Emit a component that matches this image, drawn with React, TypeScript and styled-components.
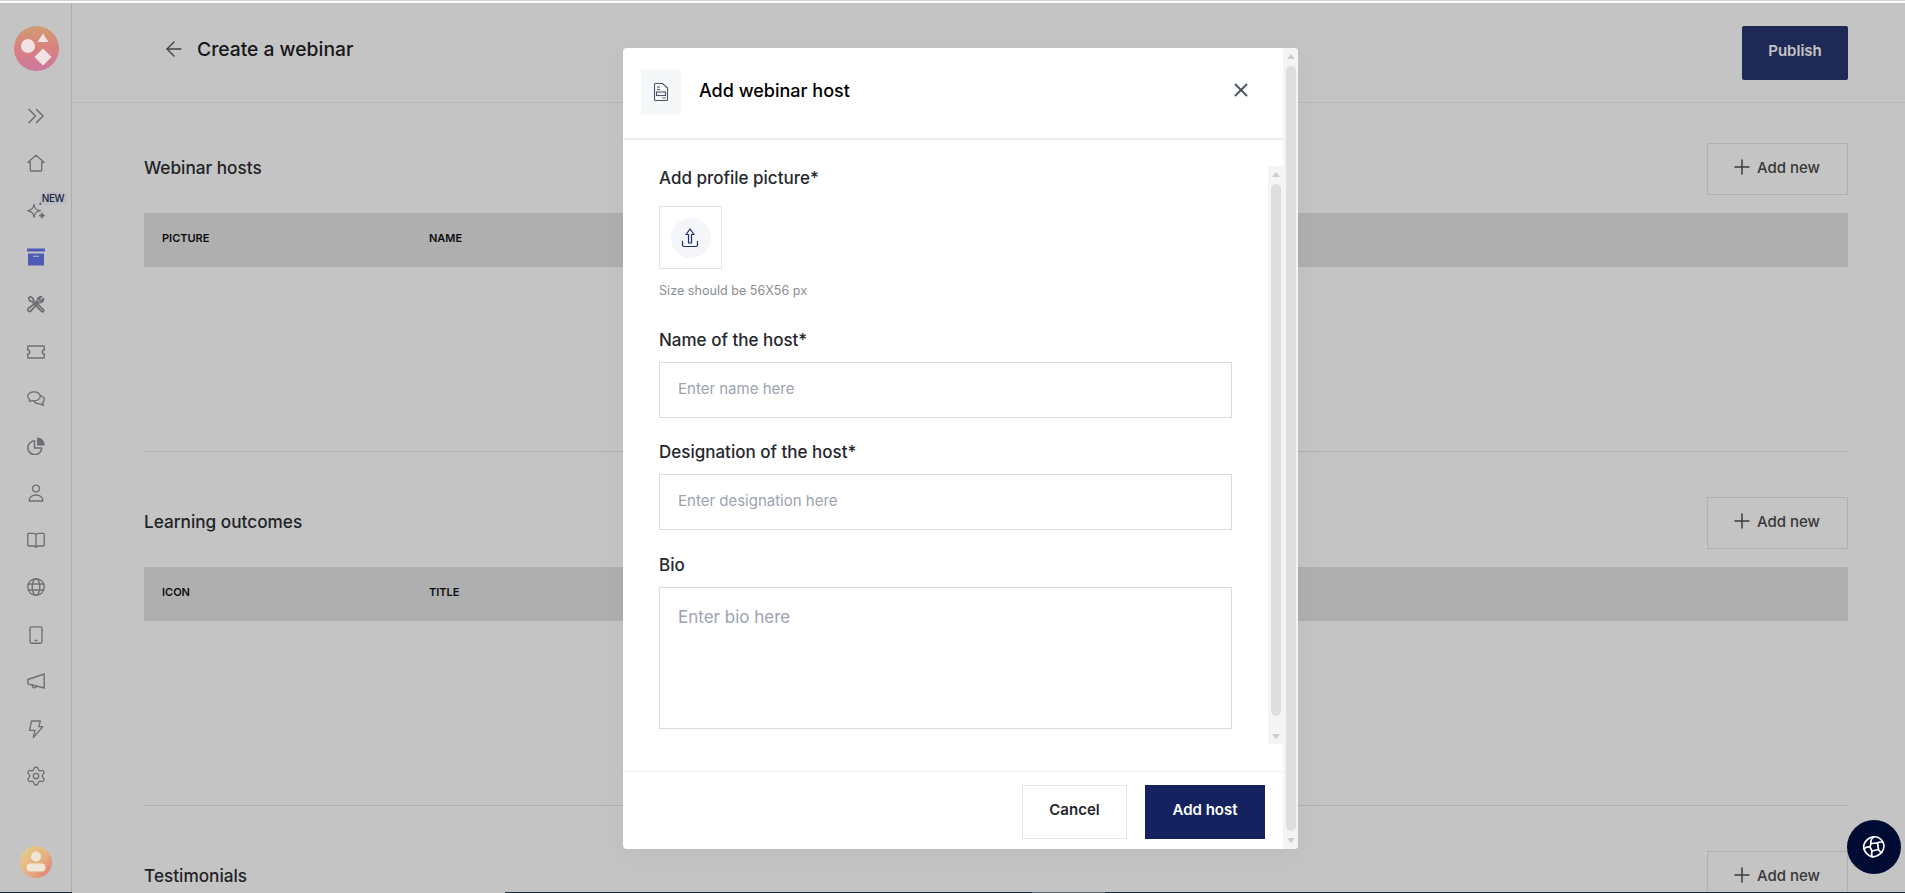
import React from 'react'
import styled, { createGlobalStyle } from 'styled-components'
import { ArrowLeft, Plus, Settings, X } from 'lucide-react'

const GlobalStyle = createGlobalStyle`
  * { box-sizing: border-box; }
  html, body { margin: 0; padding: 0; height: 100%; overflow: hidden; }
  body { font-family: Inter, "Liberation Sans", sans-serif; background: #fff; color: #1f2328; }
`

const Page = styled.div`
  position: relative;
  width: 1905px;
  height: 893px;
  display: flex;
  flex-direction: column;
  overflow: hidden;
`

const TopEdge = styled.div`
  height: 3px;
  flex: none;
  background: #fff;
  border-top: 1px solid #d4d4d4;
`

const Shell = styled.div`
  flex: 1;
  min-height: 0;
  display: flex;
`

const Sidebar = styled.aside`
  width: 72px;
  flex: none;
  display: flex;
  flex-direction: column;
  align-items: center;
  padding: 23px 0 14px;
  border-right: 1px solid #e0e0e0;
`

const Logo = styled.svg`
  position: relative;
  z-index: 11;
  width: 45px;
  height: 45px;
  margin-left: 1px;
  flex: none;
`

const Nav = styled.nav`
  margin-top: 21px;
  display: grid;
  grid-auto-rows: 47.2px;
  justify-items: center;
  align-items: center;
  width: 100%;
`

const NavItem = styled.div<{ $active?: boolean }>`
  position: relative;
  width: 18px;
  height: 18px;
  color: ${p => (p.$active ? '#6776ef' : '#8d9196')};
  svg { display: block; width: 18px; height: 18px; }
`

const GearIcon = styled(Settings)`
  transform: scale(1.2);
`

const NewBadge = styled.span`
  position: absolute;
  top: -9px;
  left: 13px;
  width: 27px;
  height: 13px;
  border-radius: 7px;
  background: #f4f4ff;
  color: #2a3150;
  font-size: 10px;
  font-weight: 500;
  letter-spacing: -0.3px;
  line-height: 13px;
  text-align: center;
`

const Avatar = styled.svg`
  position: relative;
  z-index: 11;
  margin-top: auto;
  width: 32px;
  height: 32px;
  flex: none;
`

const Main = styled.main`
  flex: 1;
  min-width: 0;
  overflow: hidden;
`

const TopBar = styled.header`
  height: 100px;
  display: flex;
  align-items: center;
  justify-content: space-between;
  padding: 0 57px 0 90px;
  border-bottom: 1px solid #ececec;
`

const BackTitle = styled.div`
  display: flex;
  align-items: center;
  gap: 11px;
  margin-bottom: 8px;
  font-size: 19.3px;
  font-weight: 500;
  color: #1d1d1f;
  svg { color: #555; }
`

const Publish = styled.button`
  width: 106px;
  height: 54px;
  border: 0;
  border-radius: 2px;
  background: #27376f;
  color: #fff;
  font: 600 15px Inter, "Liberation Sans", sans-serif;
  padding: 0 0 4px;
`

const Content = styled.div`
  padding: 0 57px 0 72px;
`

const Section = styled.section`
  padding-top: 40px;
  margin-bottom: 5px;
`

const SectionHead = styled.div`
  height: 52px;
  display: flex;
  align-items: center;
  justify-content: space-between;
  margin-bottom: 18px;
`

const SectionTitle = styled.h2`
  margin: 0 0 4px;
  font-size: 17.2px;
  font-weight: 500;
  color: #2c2e33;
`

const AddNew = styled.button`
  width: 141px;
  height: 52px;
  display: flex;
  align-items: center;
  justify-content: center;
  gap: 3px;
  padding: 0 5px 4px 0;
  border: 1px solid #e6e6e6;
  background: transparent;
  color: #4a4a4a;
  font: 500 15px Inter, "Liberation Sans", sans-serif;
`

const TableHead = styled.div`
  height: 54px;
  display: flex;
  align-items: center;
  padding: 0 18px 5px;
  background: #e4e4e4;
  font-size: 11px;
  font-weight: 600;
  color: #111;
`

const HeadCell = styled.span<{ $wide?: boolean }>`
  width: ${p => (p.$wide ? '267px' : 'auto')};
`

const TableBody = styled.div`
  height: 185px;
  border-bottom: 1px solid #e4e4e4;
`

const Overlay = styled.div`
  position: absolute;
  inset: 3px 0 0 0;
  z-index: 10;
  background: rgba(0, 0, 0, 0.23);
`

const Modal = styled.div`
  position: absolute;
  top: 45px;
  left: 623px;
  width: 675px;
  height: 801px;
  display: flex;
  background: #fff;
  border-radius: 4px;
  overflow: hidden;
  box-shadow: 0 6px 30px rgba(120, 70, 70, 0.05);
`

const ModalMain = styled.div`
  flex: 1;
  min-width: 0;
  display: flex;
  flex-direction: column;
`

const ModalHeader = styled.div`
  height: 90px;
  flex: none;
  display: flex;
  align-items: center;
  padding: 0 31px 6px 18px;
  box-shadow: 0 1px 3px rgba(0, 0, 0, 0.14);
`

const HeaderIcon = styled.div`
  width: 40px;
  height: 46px;
  margin-top: 3px;
  display: flex;
  align-items: center;
  justify-content: center;
  background: #f6f7f9;
  color: #4a5568;
`

const ModalTitle = styled.h3`
  flex: 1;
  margin: 0 0 0 18px;
  font-size: 18px;
  font-weight: 500;
  color: #000;
`

const CloseButton = styled.button`
  display: flex;
  padding: 0;
  border: 0;
  background: none;
  color: #4b5563;
`

const ModalBody = styled.div`
  flex: 1;
  min-height: 0;
  display: flex;
  padding: 28px 0 27px;
`

const Form = styled.form`
  flex: 1;
  min-width: 0;
  padding: 0 36px;
`

const Label = styled.label<{ $gap: number }>`
  display: block;
  margin-top: ${p => p.$gap}px;
  font-size: 17px;
  font-weight: 500;
  line-height: 24px;
  color: #24272c;
`

const UploadBox = styled.div`
  width: 63px;
  height: 63px;
  margin-top: 16px;
  display: flex;
  align-items: center;
  justify-content: center;
  border: 1px solid #e5e5e5;
`

const UploadCircle = styled.div`
  width: 40px;
  height: 40px;
  display: flex;
  align-items: center;
  justify-content: center;
  border-radius: 50%;
  background: #f5f6f9;
  color: #1c2a63;
  svg { margin-left: -1px; }
`

const Hint = styled.p`
  margin: 12px 0 0;
  font-size: 12.6px;
  line-height: 20px;
  color: #8d8f94;
`

const TextInput = styled.input`
  display: block;
  width: 100%;
  height: 56px;
  margin-top: 10px;
  padding: 0 18px 3px;
  border: 1px solid #dcdcdc;
  outline: 0;
  font: 400 15px Inter, "Liberation Sans", sans-serif;
  &::placeholder { color: #9ca3af; opacity: 1; }
`

const TextArea = styled.textarea`
  display: block;
  width: 100%;
  height: 142px;
  margin-top: 10px;
  padding: 17px 18px;
  border: 1px solid #dcdcdc;
  outline: 0;
  resize: none;
  font: 400 17px/24px Inter, "Liberation Sans", sans-serif;
  &::placeholder { color: #9ca3af; opacity: 1; }
`

const ModalFooter = styled.div`
  height: 78px;
  flex: none;
  display: flex;
  justify-content: flex-end;
  gap: 18px;
  padding: 13px 18px 0 0;
  border-top: 1px solid #f0f0f0;
`

const FooterButton = styled.button<{ $primary?: boolean }>`
  width: ${p => (p.$primary ? '120px' : '105px')};
  height: 54px;
  padding: 0 0 6px;
  border: 1px solid ${p => (p.$primary ? '#14235f' : '#e6e6e6')};
  background: ${p => (p.$primary ? '#14235f' : '#fff')};
  color: ${p => (p.$primary ? '#fff' : '#24272c')};
  font: 600 15px Inter, "Liberation Sans", sans-serif;
`

const Rail = styled.div<{ $endGap: number }>`
  width: 15px;
  flex: none;
  display: flex;
  flex-direction: column;
  align-items: center;
  padding: 6px 0 ${p => p.$endGap}px;
  background: #f4f4f4;
`

const RailArrow = styled.span<{ $down?: boolean }>`
  flex: none;
  width: 0;
  height: 0;
  border-left: 4px solid transparent;
  border-right: 4px solid transparent;
  ${p => (p.$down ? 'border-top: 5px solid #cdcdcd;' : 'border-bottom: 5px solid #cdcdcd;')}
`

const RailThumb = styled.span<{ $bottom: number }>`
  flex: 1;
  width: 10px;
  margin: 7px 0 ${p => p.$bottom}px;
  border-radius: 5px;
  background: #dedede;
`

const Fab = styled.button`
  position: absolute;
  z-index: 12;
  right: 4px;
  bottom: 19px;
  width: 54px;
  height: 54px;
  display: flex;
  align-items: center;
  justify-content: center;
  padding: 0;
  border: 0;
  border-radius: 50%;
  background: #000b33;
  color: #fff;
`

const BottomEdge = styled.div`
  height: 1px;
  flex: none;
  display: flex;
`

const EdgePiece = styled.span<{ $w: string; $c: string }>`
  flex: ${p => p.$w};
  background: ${p => p.$c};
`

const stroke = {
  fill: 'none',
  stroke: 'currentColor',
  strokeWidth: 1.35,
  strokeLinecap: 'round' as const,
  strokeLinejoin: 'round' as const,
}

const navIcons: React.ReactNode[] = [
  <svg key="c" viewBox="0 0 18 18" {...stroke} strokeWidth={1.6}><path d="M2 2.500 8.500 9 2 15.500M9.500 2.500 16 9l-6.500 6.500" /></svg>,
  <svg key="h" viewBox="0 0 18 18" {...stroke}><path d="M9 1.200 17 8.200h-2.300V16a1 1 0 0 1-1 1H4.300a1 1 0 0 1-1-1V8.200H1z" /></svg>,
  <svg key="s" viewBox="0 0 18 18" {...stroke}>
    <path d="M7 3.500C7.500 7.500 9 9.100 13.500 9.700 9 10.300 7.500 12 7 16.200 6.500 12 5 10.300.7 9.700 5 9.100 6.500 7.500 7 3.500z" />
    <path d="M15 12.200c.2 1.600.8 2.200 2.400 2.400-1.600.2-2.200.8-2.400 2.400-.2-1.600-.8-2.200-2.400-2.400 1.600-.2 2.200-.8 2.400-2.400z" fill="currentColor" />
    <path d="M13.400 2v1.600M12.600 2.800h1.600" />
  </svg>,
  <svg key="a" viewBox="0 0 18 18">
    <rect x="0" y="0.500" width="18" height="3" fill="currentColor" />
    <rect x="1" y="5.500" width="16" height="12" fill="currentColor" />
    <rect x="6" y="7.700" width="6" height="1.100" fill="#f0f0ff" />
  </svg>,
  <svg key="t" viewBox="0 0 18 18" {...stroke} strokeWidth={1.7}>
    <path d="M1.500 3.200 3.200 1.500l2.600 1.600.6 2 9.900 9.600a1.200 1.200 0 0 1-1.700 1.700L5 6.600l-2-.6z" />
    <path d="M10.600 6.400c-.6-2.500 1-5 4-4.900l-2.200 2.200.3 1.700 1.700.3 2.200-2.200c.1 3-2.400 4.600-4.900 4L3.800 15.900a1.700 1.700 0 0 1-2.500-2.400z" />
  </svg>,
  <svg key="k" viewBox="0 0 18 18" {...stroke} strokeWidth={1.5}><path d="M1.500 3h15a.8.8 0 0 1 .8.8V7a2 2 0 0 0 0 4v3.200a.8.8 0 0 1-.8.8h-15a.8.8 0 0 1-.8-.8V11a2 2 0 0 0 0-4V3.800a.8.8 0 0 1 .8-.8z" /></svg>,
  <svg key="m" viewBox="0 0 18 18" {...stroke} strokeWidth={1.3}>
    <path d="M7 1.800C3.500 1.800.7 3.800.7 6.300c0 1.300.8 2.500 2 3.300l-.5 1.900L5 10.600c.6.100 1.300.2 2 .2 3.500 0 6.300-2 6.300-4.500S10.500 1.800 7 1.800z" />
    <path d="M13.400 5.600c2.300.5 3.900 2.100 3.900 4 0 1.200-.7 2.300-1.800 3l.9 2.700-3.300-1.500c-2.800.2-5.100-.8-6-2.800" />
  </svg>,
  <svg key="p" viewBox="0 0 18 18" {...stroke} strokeWidth={1.5}>
    <path d="M7.500 3.700A7 7 0 1 0 14.800 11H7.500z" />
    <path d="M10 .5A7.800 7.800 0 0 1 17.800 8.500H10z" fill="currentColor" stroke="none" />
  </svg>,
  <svg key="u" viewBox="0 0 18 18" {...stroke}>
    <circle cx="9" cy="4.500" r="3.400" />
    <path d="M2.200 17v-.8c0-3 3-5.200 6.800-5.200s6.800 2.200 6.800 5.200v.8z" />
  </svg>,
  <svg key="b" viewBox="0 0 18 18" {...stroke}>
    <path d="M9 3.300C8 2.500 7 2.300 6 2.300H1.800a1 1 0 0 0-1 1V14a1 1 0 0 0 1 1H6c1.200 0 2.200.4 3 1.200.8-.8 1.800-1.200 3-1.200h4.200a1 1 0 0 0 1-1V3.300a1 1 0 0 0-1-1H12c-1 0-2 .2-3 1zM9 3.300V16" />
  </svg>,
  <svg key="g" viewBox="0 0 18 18" {...stroke}>
    <circle cx="9" cy="9" r="8.300" />
    <ellipse cx="9" cy="9" rx="3.800" ry="8.300" />
    <path d="M1.500 6h15M1.500 12h15" />
  </svg>,
  <svg key="ph" viewBox="0 0 18 18" {...stroke}>
    <rect x="3" y="0.800" width="12" height="16.400" rx="1.800" />
    <path d="M8 14.500h2" />
  </svg>,
  <svg key="me" viewBox="0 0 18 18" {...stroke}>
    <path d="M17.200 1v14L.800 10.800V6.500z" />
    <path d="M5.500 12c-.2 1.800.7 2.800 1.900 2.800s2.200-.7 2.300-1.800" />
  </svg>,
  <svg key="z" viewBox="0 0 18 18" {...stroke}><path d="M4.500 1h8.800l-1.600 5.600h4.100L6.300 17.600 8 10.300H2.500z" /></svg>,
  <GearIcon key="st" strokeWidth={1.5} />,
]

const sections = [
  { title: 'Webinar hosts', first: 'PICTURE', second: 'NAME' },
  { title: 'Learning outcomes', first: 'ICON', second: 'TITLE' },
  { title: 'Testimonials' },
]

const ScrollRail = ({ endGap, thumbBottom }: { endGap: number; thumbBottom: number }) => (
  <Rail $endGap={endGap}>
    <RailArrow />
    <RailThumb $bottom={thumbBottom} />
    <RailArrow $down />
  </Rail>
)

export default function App() {
  return (
    <>
      <GlobalStyle />
      <Page>
        <TopEdge />
        <Shell>
          <Sidebar>
            <Logo viewBox="0 0 45 45">
              <defs>
                <linearGradient id="logoFill" x1="0" y1="0" x2="0" y2="1">
                  <stop offset="0" stopColor="#cf9c72" />
                  <stop offset="0.5" stopColor="#d9817f" />
                  <stop offset="1" stopColor="#cb78a2" />
                </linearGradient>
              </defs>
              <circle cx="22.500" cy="22.500" r="22.500" fill="url(#logoFill)" />
              <circle cx="14" cy="20" r="7" fill="#f1e3e3" />
              <path d="M29 7.500 34.500 16h-11z" fill="#f1e3e3" />
              <path d="M29 22.500 37.500 31 29 39.500 20.500 31z" fill="#f1e3e3" />
            </Logo>
            <Nav>
              {navIcons.map((icon, i) => (
                <NavItem key={i} $active={i === 3}>
                  {icon}
                  {i === 2 && <NewBadge>NEW</NewBadge>}
                </NavItem>
              ))}
            </Nav>
            <Avatar viewBox="0 0 32 32">
              <defs>
                <linearGradient id="avatarFill" x1="0" y1="0" x2="1" y2="1">
                  <stop offset="0" stopColor="#e6d38e" />
                  <stop offset="0.55" stopColor="#e6b080" />
                  <stop offset="1" stopColor="#df7476" />
                </linearGradient>
              </defs>
              <circle cx="16" cy="16" r="16" fill="url(#avatarFill)" />
              <circle cx="16" cy="10.500" r="5" fill="#efe6d6" />
              <rect x="6.500" y="17.500" width="19" height="8" rx="4" fill="#efe6d6" />
            </Avatar>
          </Sidebar>
          <Main>
            <TopBar>
              <BackTitle>
                <ArrowLeft size={24} strokeWidth={1.4} />
                Create a webinar
              </BackTitle>
              <Publish>Publish</Publish>
            </TopBar>
            <Content>
              {sections.map(s => (
                <Section key={s.title}>
                  <SectionHead>
                    <SectionTitle>{s.title}</SectionTitle>
                    <AddNew><Plus size={24} strokeWidth={1.5} />Add new</AddNew>
                  </SectionHead>
                  {s.first && (
                    <>
                      <TableHead>
                        <HeadCell $wide>{s.first}</HeadCell>
                        <HeadCell>{s.second}</HeadCell>
                      </TableHead>
                      <TableBody />
                    </>
                  )}
                </Section>
              ))}
            </Content>
          </Main>
        </Shell>
        <BottomEdge>
          <EdgePiece $w="72" $c="#24394a" />
          <EdgePiece $w="433" $c="#ffffff" />
          <EdgePiece $w="527" $c="#24394a" />
          <EdgePiece $w="73" $c="#7c8790" />
          <EdgePiece $w="800" $c="#24394a" />
        </BottomEdge>
        <Overlay>
          <Modal>
            <ModalMain>
              <ModalHeader>
                <HeaderIcon>
                  <svg width="16" height="18" viewBox="0 0 16 18" fill="none" stroke="currentColor" strokeWidth="1.1">
                    <path d="M1.500 1.500a1 1 0 0 1 1-1H9.500L14.500 5v11.500a1 1 0 0 1-1 1h-11a1 1 0 0 1-1-1z" />
                    <path d="M4 4h3M4 6.500h3" />
                    <rect x="3.500" y="9" width="9" height="3.500" />
                    <path d="M9.500 15h3" />
                  </svg>
                </HeaderIcon>
                <ModalTitle>Add webinar host</ModalTitle>
                <CloseButton aria-label="Close"><X size={22} strokeWidth={2.1} /></CloseButton>
              </ModalHeader>
              <ModalBody>
                <Form>
                  <Label $gap={0}>Add profile picture*</Label>
                  <UploadBox>
                    <UploadCircle>
                      <svg width="18" height="20" viewBox="0 0 18 20" fill="none" stroke="currentColor" strokeWidth="1.2" strokeLinejoin="round" strokeLinecap="round">
                        <path d="M9 1 13 6.500h-2.500V15h-3V6.500H5z" />
                        <path d="M1.500 13.500V17a1.500 1.500 0 0 0 1.500 1.500h12a1.500 1.500 0 0 0 1.500-1.500v-3.500" />
                      </svg>
                    </UploadCircle>
                  </UploadBox>
                  <Hint>Size should be 56X56 px</Hint>
                  <Label $gap={27}>Name of the host*</Label>
                  <TextInput placeholder="Enter name here" />
                  <Label $gap={22}>Designation of the host*</Label>
                  <TextInput placeholder="Enter designation here" />
                  <Label $gap={23}>Bio</Label>
                  <TextArea placeholder="Enter bio here" />
                </Form>
                <ScrollRail endGap={5} thumbBottom={18} />
              </ModalBody>
              <ModalFooter>
                <FooterButton>Cancel</FooterButton>
                <FooterButton $primary>Add host</FooterButton>
              </ModalFooter>
            </ModalMain>
            <ScrollRail endGap={6} thumbBottom={7} />
          </Modal>
          <Fab aria-label="Help">
            <svg width="24" height="24" viewBox="0 0 24 24" fill="none" stroke="currentColor" strokeWidth="1.7" strokeLinejoin="round" strokeLinecap="round">
              <path d="M11.500 1.800c3.500-.3 7.500 2 9.500 5.500 1.500 2.700 1 7-1.300 10-2.300 3-6.700 5-9.700 4.400C6.500 21 3 17.500 2 14c-.8-3 .8-7 3-9.200 1.700-1.700 4.300-2.800 6.500-3z" />
              <path d="M9 8.500 15.500 8l1 6.500-6.500 1.500-2-4z" />
              <path d="M9 8.500C8.500 6 9.500 3.500 11.500 1.800M15.500 8c1.500-1.200 3.500-1.200 5.500-.7M16.500 14.500c.5 1.500 1.500 2.500 3.200 3M10 16c-.5 2 -.3 4 0 5.800M8 12C6 11.500 3.500 12 2 14" />
            </svg>
          </Fab>
        </Overlay>
      </Page>
    </>
  )
}
